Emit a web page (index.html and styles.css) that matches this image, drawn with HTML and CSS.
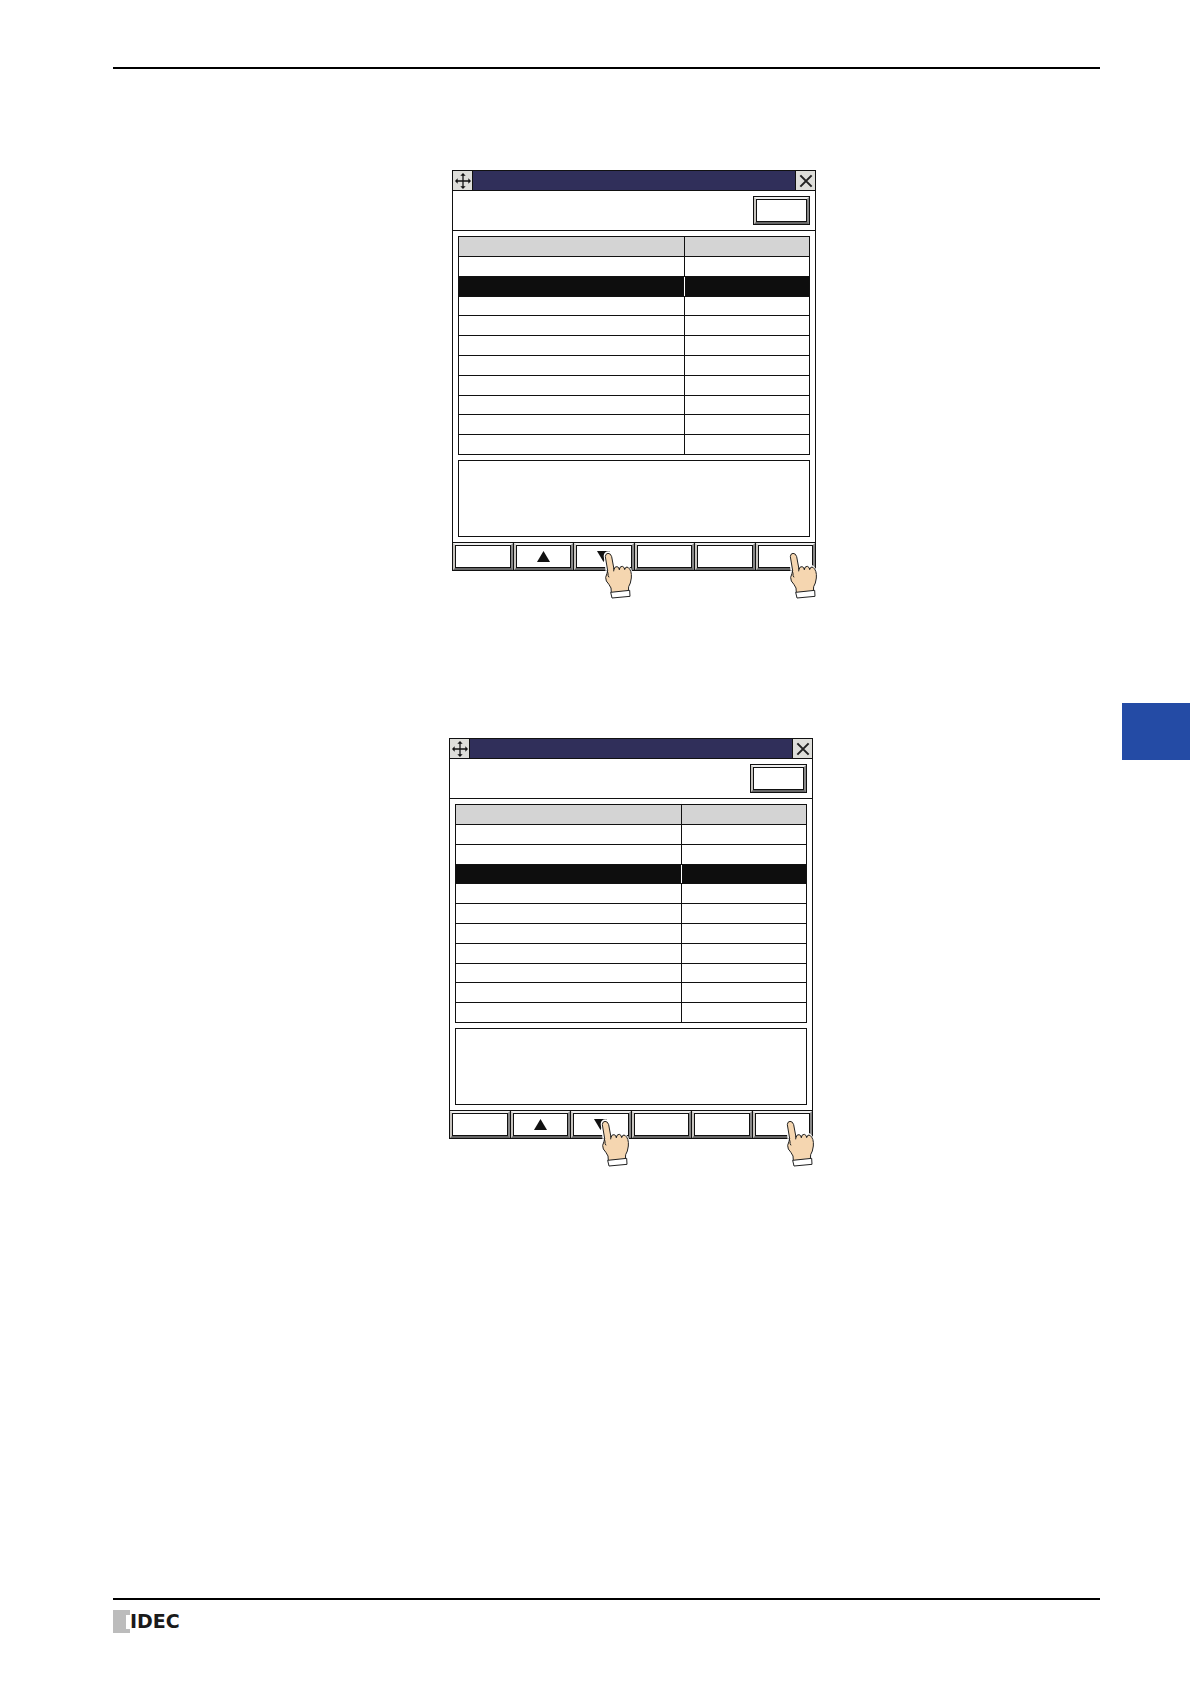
FILE: index.html
```html
<!DOCTYPE html>
<html lang="en">
<head>
    <meta charset="utf-8">
    <title>IDEC</title>
    <link rel="stylesheet" href="styles.css">
</head>
<body>
    <!-- shapes used by both windows -->
    <svg class="defs" aria-hidden="true">
        <symbol id="move" viewBox="0 0 15 15">
            <path d="M7.5 1V14M1 7.5H14" stroke="#111" stroke-width="1.2"/>
            <path d="M7.5 0L10 2.5H5zM7.5 15L10 12.5H5zM0 7.5L2.5 5V10zM15 7.5L12.5 5V10z" fill="#111"/>
        </symbol>
        <symbol id="close" viewBox="0 0 15 15">
            <path d="M2.2 2.2L12.8 12.8M12.8 2.2L2.2 12.8" stroke="#222" stroke-width="1.9"/>
        </symbol>
        <symbol id="up" viewBox="0 0 13 11">
            <path d="M6.5 0L13 11H0z" fill="#111"/>
        </symbol>
        <symbol id="down" viewBox="0 0 13 11">
            <path d="M0 0H13L6.5 11z" fill="#111"/>
        </symbol>
        <symbol id="hand" viewBox="490 360 96 150">
            <path d="M504 440L496 378Q497 368 507 368Q514 369 517 378L524 414Q530 406 538 413Q545 405 553 412Q561 405 567 415Q577 424 575 444Q573 461 567 470L567 484L515 488L514 474Q508 462 500 453Q494 443 502 430z" fill="#fff" stroke="#fff" stroke-width="8"/>
            <path d="M515 488L514 474Q508 462 500 453Q495 443 502 430L504 422L497 380Q497 371 505 370Q513 370 516 380L523 418Q525 409 532 410Q538 411 539 418Q541 408 548 409Q554 411 555 418Q558 408 565 412Q577 421 575 444Q573 461 567 470L566 484z" fill="#f5d6b0" stroke="#222" stroke-width="3" stroke-linejoin="round"/>
            <path d="M502 420L505 430Q504 437 508 442M523 414L522 424M539 414V420M555 414V419" fill="none" stroke="#222" stroke-width="3"/>
            <path d="M513 487L570 481L571 499L517 504z" fill="#fff" stroke="#222" stroke-width="3"/>
        </symbol>
    </svg>

    <div class="sheet">
        <div class="page">
            <header class="rule"></header>
            <main>
                <section class="figure">
                    <div class="window">
                        <div class="titlebar">
                            <button class="tool" aria-label="Move"><svg><use href="#move"/></svg></button>
                            <button class="tool tool-close" aria-label="Close"><svg><use href="#close"/></svg></button>
                        </div>
                        <div class="toolbar"><button class="bevel mode" aria-label="Mode"></button></div>
                        <div class="content">
                            <table>
                                <thead><tr><th class="name"></th><th></th></tr></thead>
                                <tbody>
                                    <tr><td></td><td></td></tr>
                                    <tr class="selected"><td></td><td></td></tr>
                                    <tr><td></td><td></td></tr>
                                    <tr><td></td><td></td></tr>
                                    <tr><td></td><td></td></tr>
                                    <tr><td></td><td></td></tr>
                                    <tr><td></td><td></td></tr>
                                    <tr><td></td><td></td></tr>
                                    <tr><td></td><td></td></tr>
                                    <tr><td></td><td></td></tr>
                                </tbody>
                            </table>
                            <div class="message"></div>
                        </div>
                        <div class="keys">
                            <div class="key"><button class="bevel" aria-label="Key 1"></button></div>
                            <div class="key"><button class="bevel" aria-label="Up"><svg class="arrow"><use href="#up"/></svg></button></div>
                            <div class="key"><button class="bevel" aria-label="Down"><svg class="arrow"><use href="#down"/></svg></button><svg class="hand"><use href="#hand"/></svg></div>
                            <div class="key"><button class="bevel" aria-label="Key 4"></button></div>
                            <div class="key"><button class="bevel" aria-label="Key 5"></button></div>
                            <div class="key"><button class="bevel" aria-label="Key 6"></button><svg class="hand hand-last"><use href="#hand"/></svg></div>
                        </div>
                    </div>
                </section>

                <section class="figure figure-next">
                    <div class="window">
                        <div class="titlebar">
                            <button class="tool" aria-label="Move"><svg><use href="#move"/></svg></button>
                            <button class="tool tool-close" aria-label="Close"><svg><use href="#close"/></svg></button>
                        </div>
                        <div class="toolbar"><button class="bevel mode" aria-label="Mode"></button></div>
                        <div class="content">
                            <table>
                                <thead><tr><th class="name"></th><th></th></tr></thead>
                                <tbody>
                                    <tr><td></td><td></td></tr>
                                    <tr><td></td><td></td></tr>
                                    <tr class="selected"><td></td><td></td></tr>
                                    <tr><td></td><td></td></tr>
                                    <tr><td></td><td></td></tr>
                                    <tr><td></td><td></td></tr>
                                    <tr><td></td><td></td></tr>
                                    <tr><td></td><td></td></tr>
                                    <tr><td></td><td></td></tr>
                                    <tr><td></td><td></td></tr>
                                </tbody>
                            </table>
                            <div class="message"></div>
                        </div>
                        <div class="keys">
                            <div class="key"><button class="bevel" aria-label="Key 1"></button></div>
                            <div class="key"><button class="bevel" aria-label="Up"><svg class="arrow"><use href="#up"/></svg></button></div>
                            <div class="key"><button class="bevel" aria-label="Down"><svg class="arrow"><use href="#down"/></svg></button><svg class="hand"><use href="#hand"/></svg></div>
                            <div class="key"><button class="bevel" aria-label="Key 4"></button></div>
                            <div class="key"><button class="bevel" aria-label="Key 5"></button></div>
                            <div class="key"><button class="bevel" aria-label="Key 6"></button><svg class="hand hand-last"><use href="#hand"/></svg></div>
                        </div>
                    </div>
                </section>
            </main>
            <footer class="rule">
                <div class="logo">
                    <svg class="logo-mark" viewBox="0 0 17 23"><path d="M0 0H17V5H13V19H17V23H0z" fill="#bcbcbc"/></svg>
                    <span>IDEC</span>
                </div>
            </footer>
        </div>
        <aside><div class="tab"></div></aside>
    </div>
</body>
</html>
```
FILE: styles.css
```css
* {
  box-sizing: border-box;
}

body {
  margin: 0;
  background-color: #FFF;
  font-family: "DejaVu Sans", sans-serif;
}

.defs {
  display: none;
}

.sheet {
  display: grid;
  grid-template-columns: 1fr 69px;
  column-gap: 22px;
  min-height: 100vh;
  padding-left: 113px;
}

.page {
  display: flex;
  flex-direction: column;
  padding: 67px 0 51px;
}

main {
  flex: 1;
  padding-top: 101px;
}

.rule {
  border-top: 2px solid #000;
}

/* windows */
.figure {
  display: flex;
  justify-content: center;
  padding-left: 55px;
}

.figure-next {
  margin-top: 167px;
  padding-left: 49px;
}

.window {
  width: 364px;
  border: 1px solid #111;
}

.titlebar {
  display: flex;
  justify-content: space-between;
  height: 20px;
  background-color: #302F5A;
  border-bottom: 1px solid #111;
}

.tool {
  display: flex;
  align-items: center;
  justify-content: center;
  width: 20px;
  padding: 0;
  background-color: #DEDEDA;
  border: 0;
  border-right: 1px solid #111;
}

.tool-close {
  border-right: 0;
  border-left: 1px solid #111;
}

.tool svg {
  width: 16px;
  height: 16px;
}

.toolbar {
  display: flex;
  justify-content: flex-end;
  height: 40px;
  padding: 5px;
  border-bottom: 1px solid #111;
}

.bevel {
  display: flex;
  align-items: center;
  justify-content: center;
  width: 100%;
  height: 100%;
  padding: 0;
  background-color: #FFF;
  border: 2px solid;
  border-color: #EEE #888 #666 #C8C5C0;
  box-shadow: inset 0 0 0 1px #111;
}

.mode {
  width: 57px;
  height: 29px;
  outline: 1px solid #111;
  outline-offset: -1px;
  border-width: 3px;
}

.content {
  padding: 5px;
}

table {
  width: 100%;
  height: 219px;
  table-layout: fixed;
  border-collapse: collapse;
}

th, td {
  padding: 0;
  border: 1px solid #111;
}

th {
  height: 20px;
  background-color: #D4D4D4;
}

.name {
  width: 226px;
}

.selected td {
  background-color: #0E0E0E;
}

.selected td:first-child {
  border-right: 1px solid #FFF;
}

.selected td:last-child {
  border-left: 1px solid #FFF;
}

.message {
  height: 77px;
  margin-top: 5px;
  border: 1px solid #111;
}

/* bottom keys */
.keys {
  display: flex;
  height: 28px;
  border-top: 1px solid #111;
}

.key {
  position: relative;
  flex: 1;
  border-right: 1px solid #111;
}

.key:last-child {
  border-right: 0;
}

.arrow {
  width: 13px;
  height: 11px;
}

.hand {
  position: absolute;
  top: 7px;
  left: 29px;
  width: 32px;
  height: 50px;
}

.hand-last {
  left: 32px;
}

/* footer */
.logo {
  display: flex;
  align-items: center;
  height: 23px;
  margin-top: 10px;
  color: #1A1A1A;
  font-size: 19px;
  font-weight: bold;
  line-height: 23px;
}

.logo-mark {
  width: 17px;
  height: 23px;
}

/* chapter tab */
.tab {
  height: 57px;
  margin: 703px 1px 0 0;
  background-color: #244BA5;
}
```
